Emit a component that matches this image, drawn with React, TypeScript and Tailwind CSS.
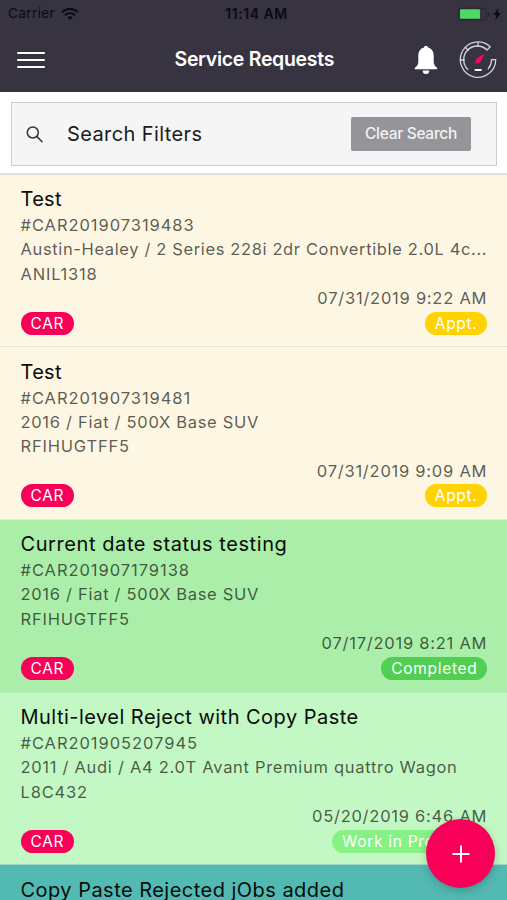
import React from "react";

type Details = {
  code: string;
  vehicle: string;
  plate: string;
  date: string;
  status: string;
};

type Request = {
  title: string;
  details?: Details;
  rowClass: string;
  titleClass: string;
  vehicleClass?: string;
  badgeClass?: string;
};

const requests: Request[] = [
  {
    title: "Test",
    details: {
      code: "#CAR201907319483",
      vehicle: "Austin-Healey / 2 Series 228i 2dr Convertible 2.0L 4c...",
      plate: "ANIL1318",
      date: "07/31/2019 9:22 AM",
      status: "Appt.",
    },
    rowClass: "h-[172px] pt-[12px] bg-[#fcf6e2] border-[#e9e5d4]",
    titleClass: "tracking-[0.3px]",
    vehicleClass: "tracking-[0.63px]",
    badgeClass: "bg-[#ffd300] pl-[10px] pr-[9.5px]",
  },
  {
    title: "Test",
    details: {
      code: "#CAR201907319481",
      vehicle: "2016 / Fiat / 500X Base SUV",
      plate: "RFIHUGTFF5",
      date: "07/31/2019 9:09 AM",
      status: "Appt.",
    },
    rowClass: "h-[173px] pt-[12.5px] bg-[#fcf6e2] border-[#dff0cc]",
    titleClass: "tracking-[0.3px]",
    vehicleClass: "tracking-[0.7px]",
    badgeClass: "bg-[#ffd300] pl-[10px] pr-[9.5px]",
  },
  {
    title: "Current date status testing",
    details: {
      code: "#CAR201907179138",
      vehicle: "2016 / Fiat / 500X Base SUV",
      plate: "RFIHUGTFF5",
      date: "07/17/2019 8:21 AM",
      status: "Completed",
    },
    rowClass: "h-[173px] pt-[12px] bg-[#abeeaa] border-[#b3edb5]",
    titleClass: "tracking-[0.58px]",
    vehicleClass: "tracking-[0.7px]",
    badgeClass: "bg-[#50cf52] pl-[10px] pr-[9.5px]",
  },
  {
    title: "Multi-level Reject with Copy Paste",
    details: {
      code: "#CAR201905207945",
      vehicle: "2011 / Audi / A4 2.0T Avant Premium quattro Wagon",
      plate: "L8C432",
      date: "05/20/2019 6:46 AM",
      status: "Work in Progress",
    },
    rowClass: "h-[172px] pt-[12px] bg-[#c3f7c3] border-[#9fd9c0]",
    titleClass: "tracking-[0.47px]",
    vehicleClass: "tracking-[0.7px]",
    badgeClass: "bg-[#86f284] pl-[10px] pr-[8.5px]",
  },
  {
    title: "Copy Paste Rejected jObs added",
    rowClass: "h-[173px] pt-[12.5px] bg-[#53b9b3] border-[#53b9b3]",
    titleClass: "tracking-[0.47px]",
  },
];

function StatusBar() {
  return (
    <div className="relative flex h-[27px] items-center justify-between pl-[8px] pr-[5px] text-[13.5px] text-[#0b0a10]">
      <div className="flex items-center gap-[6px] tracking-[0.4px]">
        <span>Carrier</span>
        <svg width="18" height="12" viewBox="0 0 18 12" fill="none" stroke="currentColor" strokeWidth="2.1">
          <path d="M1 4.3C5.6-.3 12.4-.3 17 4.3" />
          <path d="M4 7.3c3-2.8 7-2.8 10 0" />
          <path d="M6.3 9.4c1.6-1.4 3.8-1.4 5.4 0L9 12z" fill="currentColor" stroke="none" />
        </svg>
      </div>
      <span className="absolute inset-x-0 pl-[6px] text-center text-[14px] font-semibold tracking-[0.55px]">
        11:14 AM
      </span>
      <svg width="44" height="14" viewBox="0 0 44 14">
        <rect x=".5" y="1.2" width="28" height="11.8" rx="2.5" fill="none" stroke="#28252f" />
        <rect x="2" y="2.2" width="20" height="9.5" rx="1" fill="#4cd964" />
        <path d="M30 5.2c1.5.6 1.5 3.4 0 4z" fill="#24212b" />
        <path d="M40.5.8 35.5 8h3l-1.500 5.500 6-7.500h-3.400z" fill="#0b0a10" />
      </svg>
    </div>
  );
}

function Gauge() {
  return (
    <svg
      width="38"
      height="38"
      viewBox="0 0 38 38"
      fill="none"
      stroke="#d3d2d8"
      strokeWidth="1.3"
      strokeLinejoin="round"
      strokeLinecap="round"
    >
      <path d="M8.7 28.3A13.5 13.5 0 0 1 28 9l3.200-3.200A17.700 17.700 0 1 0 36.700 18.600H32.500A13.500 13.500 0 0 1 29.300 27.700" />
      <path d="M19 1.400v3.900M6.500 6.500l2.900 2.900M1.400 19h3.900" />
      <path d="M25.500 12.500 21.700 20.400c-.9 1.500-2.800 1.500-5 2.300-.3-2.300-.2-4 1.100-5.100z" fill="#f80660" stroke="none" />
      <path d="M16.500 29h5.400" stroke="#fff" strokeWidth="2" />
    </svg>
  );
}

function Header() {
  return (
    <header className="h-[92px] bg-[#373340]">
      <StatusBar />
      <div className="relative flex h-[65px] items-center justify-between pl-[17px] pr-[10.5px]">
        <button className="flex w-[28px] flex-col gap-[5px]" aria-label="Menu">
          <span className="h-[2px] rounded-full bg-white" />
          <span className="h-[2px] rounded-full bg-white" />
          <span className="h-[2px] rounded-full bg-white" />
        </button>
        <h1 className="absolute left-[174.5px] text-[19.5px] font-semibold tracking-[-0.3px] text-white">
          Service Requests
        </h1>
        <div className="flex items-center gap-[20.5px]">
          <svg width="24" height="30" viewBox="0 0 24 30" fill="#fff">
            <path d="M12 .7c1.100 0 1.900.8 2 1.900 3.700 1 5.700 4 5.700 8.200v5.900c0 2.800 1.400 4.300 3.300 6 .6.6.3 1.600-.6 1.600H1.600c-.9 0-1.200-1-.6-1.600 1.900-1.700 3.300-3.200 3.300-6v-5.900c0-4.200 2-7.200 5.700-8.200.1-1.100.9-1.900 2-1.900zM8.700 25.500h6.600a3.300 3.600 0 0 1-6.600 0z" />
          </svg>
          <Gauge />
        </div>
      </div>
    </header>
  );
}

function SearchBar() {
  return (
    <section className="h-[83px] border-b-2 border-[#dfdfd9] bg-white px-[10.5px] pt-[10px]">
      <div className="flex h-[64px] items-center border border-[#cdcdcd] bg-[#f5f5f5] pl-[14px] pr-[24.5px]">
        <svg
          width="18"
          height="18"
          viewBox="0 0 18 18"
          fill="none"
          stroke="#333"
          strokeWidth="1.5"
          strokeLinecap="round"
        >
          <circle cx="6.8" cy="7.5" r="5.5" />
          <path d="m10.9 11.600 5.200 5.200" />
        </svg>
        <span className="ml-[23.5px] flex-1 text-[20px] tracking-[0.4px] text-[#1b1b1b]">Search Filters</span>
        <button className="h-[34px] w-[120px] rounded-[2px] bg-[#959499] text-[15.5px] font-medium tracking-[-0.3px] text-[#f1f1f4]">
          Clear Search
        </button>
      </div>
    </section>
  );
}

function RequestRow({ item }: { item: Request }) {
  const { details } = item;
  return (
    <li className={"shrink-0 border-b px-[20.5px] " + item.rowClass}>
      <h2 className={"h-[26px] whitespace-nowrap text-[20px] leading-[25px] text-[#080c08] " + item.titleClass}>
        {item.title}
      </h2>
      {details && (
        <>
          <div className="text-[16.5px] leading-[24.4px] tracking-[0.7px] whitespace-nowrap text-black/65">
            <p className="tracking-[0.95px]">{details.code}</p>
            <p className={item.vehicleClass}>{details.vehicle}</p>
            <p className="tracking-[0.8px]">{details.plate}</p>
            <p className="-mr-[0.7px] text-right tracking-[0.75px]">{details.date}</p>
          </div>
          <div className="flex justify-between pt-[1px] text-[15.5px] leading-[23px] tracking-[0.7px] text-white">
            <span className="h-[23px] rounded-full bg-[#f80058] pr-[9.5px] pl-[10px]">CAR</span>
            <span className={"-mr-[0.5px] h-[23px] rounded-full " + item.badgeClass}>{details.status}</span>
          </div>
        </>
      )}
    </li>
  );
}

export default function App() {
  return (
    <div className="relative flex h-[900px] w-[507px] flex-col overflow-hidden bg-white font-['Inter','Liberation_Sans',sans-serif]">
      <Header />
      <SearchBar />
      <ul className="flex min-h-0 flex-1 flex-col overflow-hidden">
        {requests.map((item, index) => (
          <RequestRow key={index} item={item} />
        ))}
      </ul>
      <button
        aria-label="Add"
        className="absolute right-[12px] bottom-[12px] flex size-[69px] items-center justify-center rounded-full bg-[#f80058] shadow-[0_3px_8px_rgba(0,0,0,0.2)]"
      >
        <svg width="18" height="18" viewBox="0 0 18 18" stroke="#fff" strokeWidth="2">
          <path d="M9 .5v17M.5 9h17" />
        </svg>
      </button>
    </div>
  );
}
